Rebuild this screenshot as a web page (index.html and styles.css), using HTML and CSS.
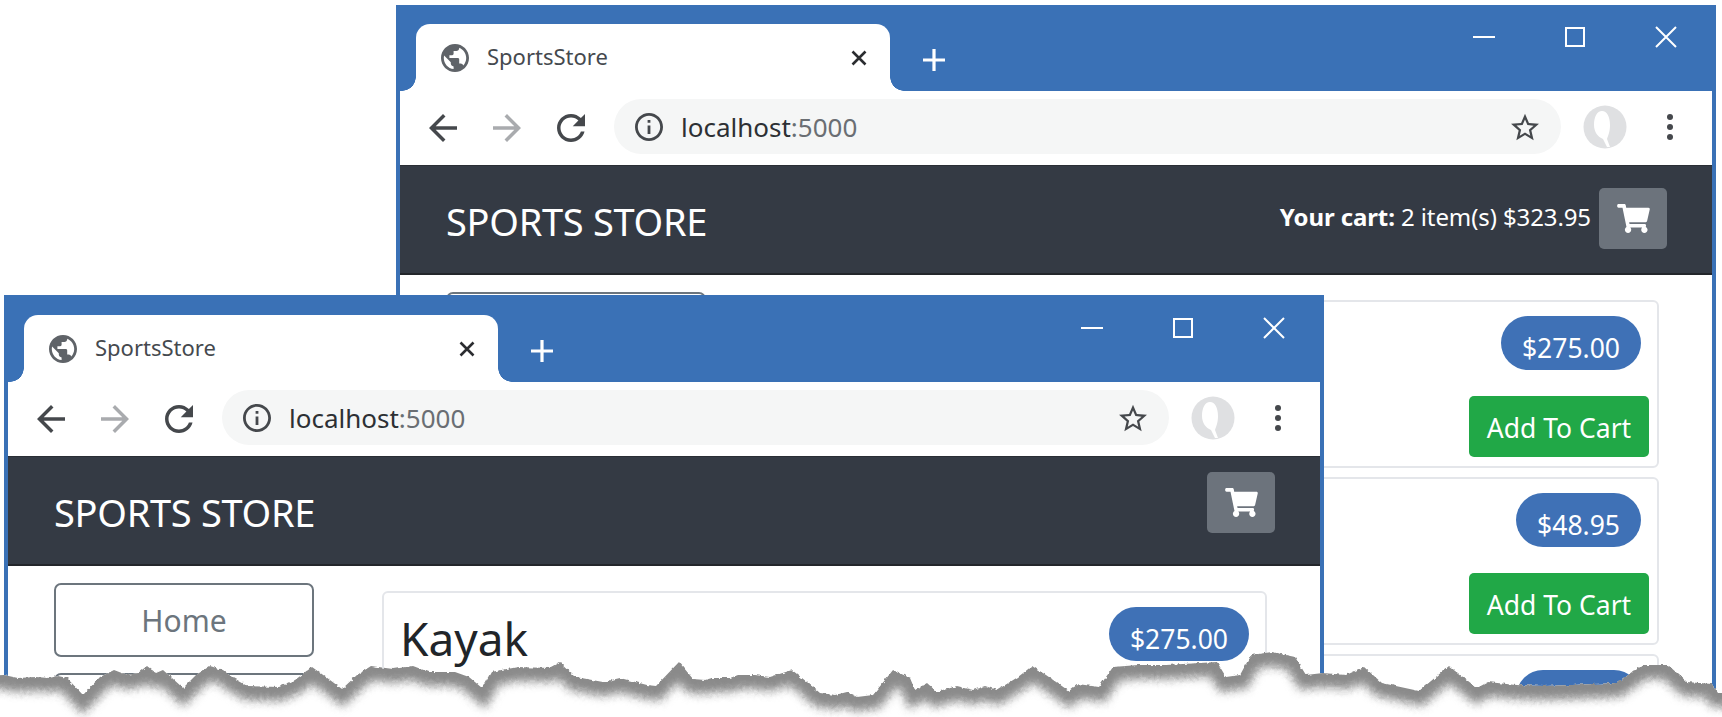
FILE: index.html
```html
<!DOCTYPE html>
<html lang="en">
<head>
  <meta charset="UTF-8">
  <title>SportsStore</title>
  <link rel="stylesheet" href="styles.css">
</head>
<body>
  <!-- shared icons -->
  <svg class="icon-defs" aria-hidden="true">
    <symbol id="i-globe" viewBox="2 2 20 20"><path d="M12 2C6.48 2 2 6.48 2 12s4.48 10 10 10 10-4.48 10-10S17.52 2 12 2zm-1 17.93c-3.95-.49-7-3.85-7-7.93 0-.62.08-1.21.21-1.79L9 15v1c0 1.1.9 2 2 2v1.93zm6.9-2.54c-.26-.81-1-1.39-1.9-1.39h-1v-3c0-.55-.45-1-1-1H8v-2h2c.55 0 1-.45 1-1V7h2c1.1 0 2-.9 2-2v-.41c2.93 1.19 5 4.06 5 7.41 0 2.08-.8 3.97-2.1 5.39z"/></symbol>
    <symbol id="i-back" viewBox="4 4 16 16"><path d="M20 11H7.83l5.59-5.59L12 4l-8 8 8 8 1.41-1.41L7.83 13H20v-2z"/></symbol>
    <symbol id="i-forward" viewBox="4 4 16 16"><path d="M4 11h12.17l-5.59-5.59L12 4l8 8-8 8-1.41-1.41L16.17 13H4v-2z"/></symbol>
    <symbol id="i-reload" viewBox="4 4 16 16"><path d="M17.65 6.35C16.2 4.9 14.21 4 12 4c-4.42 0-7.99 3.58-7.99 8s3.57 8 7.99 8c3.73 0 6.84-2.55 7.73-6h-2.08c-.82 2.33-3.04 4-5.65 4-3.31 0-6-2.69-6-6s2.69-6 6-6c1.66 0 3.14.69 4.22 1.78L13 11h7V4l-2.35 2.35z"/></symbol>
    <symbol id="i-info" viewBox="2 2 20 20"><path d="M11 7h2v2h-2zm0 4h2v6h-2zm1-9C6.48 2 2 6.48 2 12s4.48 10 10 10 10-4.48 10-10S17.52 2 12 2zm0 18c-4.41 0-8-3.59-8-8s3.59-8 8-8 8 3.59 8 8-3.59 8-8 8z"/></symbol>
    <symbol id="i-star" viewBox="2 2 20 19"><path d="M22 9.24l-7.19-.62L12 2 9.19 8.63 2 9.24l5.46 4.73L5.82 21 12 17.27 18.18 21l-1.63-7.03L22 9.24zM12 15.4l-3.76 2.27 1-4.28-3.32-2.88 4.38-.38L12 6.1l1.71 4.04 4.38.38-3.32 2.88 1 4.28L12 15.4z"/></symbol>
    <symbol id="i-cart" viewBox="0 0 576 512"><path d="M528.12 301.319l47.273-208C578.806 78.301 567.391 64 551.99 64H159.208l-9.166-44.81C147.758 8.021 137.93 0 126.529 0H24C10.745 0 0 10.745 0 24v16c0 13.255 10.745 24 24 24h69.883l70.248 343.435C147.325 417.1 136 435.222 136 456c0 30.928 25.072 56 56 56s56-25.072 56-56c0-15.674-6.447-29.835-16.824-40h209.647C430.447 426.165 424 440.326 424 456c0 30.928 25.072 56 56 56s56-25.072 56-56c0-22.172-12.888-41.332-31.579-50.405l5.517-24.276c3.413-15.018-8.002-29.319-23.403-29.319H218.117l-6.545-32h293.145c11.206 0 20.92-7.754 23.403-18.681z"/></symbol>
    <symbol id="i-avatar" viewBox="0 0 44 44"><circle cx="22" cy="22" r="21.5" fill="#dfe0e2"/><path d="M19 6c5 0 8 6 8 14 0 7-2 11-3 14l3 8h-3l-4-8c-5-2-9-7-9-14C11 12 14 6 19 6z" fill="#fff"/></symbol>
  </svg>

  <div class="stage">
    <!-- wide window, behind -->
    <div class="window window-back">
      <div class="titlebar">
        <div class="tab">
          <svg class="icon-28 favicon"><use href="#i-globe"/></svg>
          <span class="tab-title">SportsStore</span>
          <svg class="tab-close" viewBox="0 0 16 16"><path d="M1.5 1.5l13 13M14.5 1.5l-13 13"/></svg>
        </div>
        <svg class="new-tab" viewBox="0 0 24 24"><path d="M12 1v22M1 12h22"/></svg>
        <div class="win-controls">
          <svg class="win-btn" viewBox="0 0 22 22"><path d="M0 11h22"/></svg>
          <svg class="win-btn" viewBox="0 0 22 22"><path d="M2 2h18v18H2z"/></svg>
          <svg class="win-btn" viewBox="0 0 22 22"><path d="M1 1l20 20M21 1L1 21"/></svg>
        </div>
      </div>
      <div class="toolbar">
        <svg class="icon-28 tool"><use href="#i-back"/></svg>
        <svg class="icon-28 tool tool-off"><use href="#i-forward"/></svg>
        <svg class="icon-28 tool"><use href="#i-reload"/></svg>
        <div class="address">
          <svg class="icon-28 tool-plain"><use href="#i-info"/></svg>
          <span class="url">localhost<span class="url-port">:5000</span></span>
          <svg class="icon-28 star"><use href="#i-star"/></svg>
        </div>
        <svg class="avatar"><use href="#i-avatar"/></svg>
        <div class="dots"><i></i><i></i><i></i></div>
      </div>
      <div class="navbar">
        <span class="brand">SPORTS STORE</span>
        <div class="cart-summary">
          <span class="cart-text"><b>Your cart:</b> 2 item(s) $323.95</span>
          <div class="cart-btn"><svg class="cart-icon"><use href="#i-cart"/></svg></div>
        </div>
      </div>
      <div class="content">
        <div class="sidebar">
          <div class="nav-btn">Home</div>
        </div>
        <div class="products">
          <div class="card">
            <div class="card-head"><span class="badge">$275.00</span></div>
            <div class="card-foot"><span class="add-btn">Add To Cart</span></div>
          </div>
          <div class="card">
            <div class="card-head"><span class="badge">$48.95</span></div>
            <div class="card-foot"><span class="add-btn">Add To Cart</span></div>
          </div>
          <div class="card">
            <div class="card-head"><span class="badge">$19.50</span></div>
          </div>
        </div>
      </div>
    </div>

    <!-- narrow window, in front -->
    <div class="window window-front">
      <div class="titlebar">
        <div class="tab">
          <svg class="icon-28 favicon"><use href="#i-globe"/></svg>
          <span class="tab-title">SportsStore</span>
          <svg class="tab-close" viewBox="0 0 16 16"><path d="M1.5 1.5l13 13M14.5 1.5l-13 13"/></svg>
        </div>
        <svg class="new-tab" viewBox="0 0 24 24"><path d="M12 1v22M1 12h22"/></svg>
        <div class="win-controls">
          <svg class="win-btn" viewBox="0 0 22 22"><path d="M0 11h22"/></svg>
          <svg class="win-btn" viewBox="0 0 22 22"><path d="M2 2h18v18H2z"/></svg>
          <svg class="win-btn" viewBox="0 0 22 22"><path d="M1 1l20 20M21 1L1 21"/></svg>
        </div>
      </div>
      <div class="toolbar">
        <svg class="icon-28 tool"><use href="#i-back"/></svg>
        <svg class="icon-28 tool tool-off"><use href="#i-forward"/></svg>
        <svg class="icon-28 tool"><use href="#i-reload"/></svg>
        <div class="address">
          <svg class="icon-28 tool-plain"><use href="#i-info"/></svg>
          <span class="url">localhost<span class="url-port">:5000</span></span>
          <svg class="icon-28 star"><use href="#i-star"/></svg>
        </div>
        <svg class="avatar"><use href="#i-avatar"/></svg>
        <div class="dots"><i></i><i></i><i></i></div>
      </div>
      <div class="navbar navbar-compact">
        <span class="brand">SPORTS STORE</span>
        <div class="cart-summary">
          <div class="cart-btn"><svg class="cart-icon"><use href="#i-cart"/></svg></div>
        </div>
      </div>
      <div class="content">
        <div class="sidebar">
          <div class="nav-btn">Home</div>
          <div class="nav-btn"></div>
        </div>
        <div class="products">
          <div class="card">
            <div class="card-head"><span class="card-title">Kayak</span><span class="badge">$275.00</span></div>
          </div>
        </div>
      </div>
    </div>

    <!-- torn paper edge across the bottom -->
    <svg class="tear" viewBox="0 0 1722 717">
      <defs>
        <polygon id="tear-line" points="-40,677 4,675 18,678 36,677 49,678 58,676 67,678 83,695 100,677 114,670 127,675 138,673 147,666 156,673 163,670 172,678 183,688 196,675 210,666 223,670 232,677 248,686 279,687 295,680 312,667 326,677 342,689 357,675 371,666 393,669 413,666 429,672 455,672 469,677 482,688 491,672 518,667 549,668 560,662 576,677 603,682 620,678 647,685 656,686 679,662 693,679 705,680 712,678 730,678 738,675 755,675 770,677 792,670 807,682 820,693 835,695 847,692 857,697 873,695 893,670 910,678 915,690 927,683 937,692 957,686 973,690 985,686 997,690 1018,677 1032,666 1046,675 1069,691 1078,684 1099,687 1113,667 1138,665 1166,665 1217,662 1226,677 1240,675 1251,655 1272,652 1295,657 1306,675 1323,673 1346,675 1364,667 1382,683 1419,691 1449,666 1477,688 1488,682 1516,685 1544,686 1571,685 1617,683 1643,665 1668,665 1687,682 1712,684 1718,693 1760,693 1760,770 -40,770"/>
        <clipPath id="tear-clip"><use href="#tear-line"/></clipPath>
        <filter id="tear-blur" filterUnits="userSpaceOnUse" x="-40" y="600" width="1800" height="200" color-interpolation-filters="sRGB">
          <feGaussianBlur stdDeviation="5"/>
        </filter>
        <filter id="tear-rough" filterUnits="userSpaceOnUse" x="0" y="600" width="1722" height="117" color-interpolation-filters="sRGB">
          <feTurbulence type="fractalNoise" baseFrequency="0.3" numOctaves="1" seed="4"/>
          <feDisplacementMap in="SourceGraphic" scale="4" xChannelSelector="R" yChannelSelector="G"/>
        </filter>
      </defs>
      <g filter="url(#tear-rough)">
        <use href="#tear-line" class="tear-paper"/>
        <g clip-path="url(#tear-clip)">
          <use href="#tear-line" class="tear-shadow" filter="url(#tear-blur)"/>
        </g>
      </g>
    </svg>
  </div>
</body>
</html>
```

FILE: styles.css
```css
html, body {
  margin: 0;
  padding: 0;
  background: #fff;
}
body {
  width: 1722px;
  height: 717px;
  overflow: hidden;
  font-family: 'Noto Sans', 'Open Sans', sans-serif;
  color: #212529;
}
.icon-defs {
  display: none;
}
.stage {
  position: relative;
  width: 1722px;
  height: 717px;
  overflow: hidden;
}

/* browser window */
.window {
  position: absolute;
  width: 1320px;
  height: 720px;
  box-sizing: border-box;
  border-left: 4px solid #3a71b6;
  border-right: 4px solid #3a71b6;
  background: #fff;
}
.window-back {
  left: 396px;
  top: 5px;
}
.window-front {
  left: 4px;
  top: 296px;
  box-shadow: 0 -1px 0 #3a71b6;
}

.titlebar {
  height: 86px;
  margin: 0 -4px;
  padding-left: 20px;
  background: #3a71b6;
  display: flex;
  align-items: flex-start;
}
.tab {
  position: relative;
  width: 474px;
  height: 67px;
  margin-top: 19px;
  padding: 0 23px 0 25px;
  box-sizing: border-box;
  background: #fff;
  border-radius: 14px 14px 0 0;
  display: flex;
  align-items: center;
}
.tab::before,
.tab::after {
  content: "";
  position: absolute;
  bottom: 0;
  width: 14px;
  height: 14px;
}
.tab::before {
  left: -14px;
  background: radial-gradient(circle at 0 0, transparent 13.5px, #fff 14px);
}
.tab::after {
  right: -14px;
  background: radial-gradient(circle at 100% 0, transparent 13.5px, #fff 14px);
}
.favicon {
  fill: #5f6368;
}
.tab-title {
  margin: -4px 0 0 18px;
  font-size: 22px;
  color: #45494e;
}
.tab-close {
  width: 16px;
  height: 16px;
  margin-left: auto;
  fill: none;
  stroke: #2b2d30;
  stroke-width: 2.6;
}
.new-tab {
  width: 24px;
  height: 24px;
  margin: 43px 0 0 32px;
  fill: none;
  stroke: #fff;
  stroke-width: 3.2;
}
.win-controls {
  margin: 21px 0 0 auto;
  display: flex;
  gap: 69px;
  padding-right: 39px;
}
.win-btn {
  width: 22px;
  height: 22px;
  fill: none;
  stroke: #fff;
  stroke-width: 2;
}

.toolbar {
  height: 74px;
  padding-left: 29px;
  box-sizing: border-box;
  display: flex;
  align-items: center;
}
.icon-28 {
  width: 28px;
  height: 28px;
  flex: none;
}
.tool {
  fill: #45484c;
  margin-right: 36px;
}
.tool-off {
  fill: #a9abae;
}
.tool-plain {
  fill: #45484c;
}
.address {
  width: 947px;
  height: 55px;
  margin: -3px 0 0 -7px;
  padding: 0 22px 0 21px;
  box-sizing: border-box;
  background: #f5f6f6;
  border-radius: 28px;
  display: flex;
  align-items: center;
}
.url {
  margin-left: 18px;
  font-size: 26px;
  color: #2d3034;
}
.url-port {
  color: #6a6e73;
}
.star {
  margin-left: auto;
  fill: #45484c;
}
.avatar {
  width: 44px;
  height: 44px;
  margin: -3px 0 0 22px;
}
.dots {
  margin: -3px 0 0 40px;
  display: flex;
  flex-direction: column;
  gap: 4px;
}
.dots i {
  display: block;
  width: 6px;
  height: 6px;
  border-radius: 50%;
  background: #45484c;
}

.navbar {
  height: 110px;
  padding: 0 45px 0 46px;
  box-sizing: border-box;
  background: #343a44;
  border-top: 1px solid #2a2e35;
  border-bottom: 2px solid #23262b;
  display: flex;
  align-items: center;
  justify-content: space-between;
}
.brand {
  margin-top: 2px;
  font-size: 38px;
  color: #fff;
  letter-spacing: -0.3px;
}
.cart-summary {
  display: flex;
  align-items: center;
  gap: 8px;
  margin-top: -3px;
  color: #fff;
}
.navbar-compact .cart-summary {
  margin-top: -17px;
}
.cart-text {
  font-size: 24px;
  letter-spacing: -0.1px;
  margin-top: -4px;
}
.cart-btn {
  width: 68px;
  height: 61px;
  border-radius: 5px;
  background: #6c737c;
  display: flex;
  align-items: center;
  justify-content: center;
}
.cart-icon {
  width: 33px;
  height: 29px;
  fill: #fff;
}

/* page content */
.content {
  padding: 17px 53px 0 46px;
  display: flex;
  gap: 68px;
}
.sidebar {
  width: 260px;
  flex: none;
  display: flex;
  flex-direction: column;
  gap: 16px;
}
.nav-btn {
  height: 74px;
  box-sizing: border-box;
  border: 2px solid #6c757d;
  border-radius: 7px;
  color: #6c757d;
  font-size: 30px;
  display: flex;
  align-items: center;
  justify-content: center;
}
.products {
  flex: 1;
  margin-top: 8px;
  display: flex;
  flex-direction: column;
  gap: 9px;
}
.card {
  height: 168px;
  flex: none;
  box-sizing: border-box;
  padding: 14px 8px 0 16px;
  border: 2px solid #e4e6ea;
  border-radius: 6px;
}
.card-head {
  display: flex;
  align-items: flex-start;
  justify-content: space-between;
  padding-right: 8px;
}
.card-title {
  font-size: 46px;
  line-height: 62px;
}
.badge {
  margin-left: auto;
  height: 54px;
  padding: 0 21px;
  border-radius: 27px;
  background: #3f71b6;
  color: #fff;
  font-size: 26.5px;
  line-height: 64px;
}
.card-foot {
  margin-top: 26px;
  display: flex;
  justify-content: flex-end;
}
.add-btn {
  width: 180px;
  height: 61px;
  padding-top: 2px;
  box-sizing: border-box;
  border-radius: 5px;
  background: #21a847;
  color: #fff;
  font-size: 26.5px;
  display: flex;
  align-items: center;
  justify-content: center;
}

/* torn edge */
.tear {
  position: absolute;
  left: 0;
  top: 0;
  width: 1722px;
  height: 717px;
}
.tear-paper {
  fill: #fff;
}
.tear-shadow {
  fill: none;
  stroke: #8a8a8a;
  stroke-width: 24;
  transform: translateY(2px);
}
```
